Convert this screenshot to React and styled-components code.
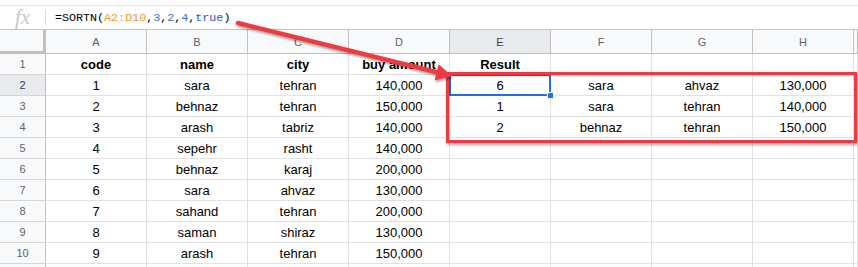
import React from 'react';
import styled, { createGlobalStyle } from 'styled-components';

const Global = createGlobalStyle`
  html, body { margin: 0; padding: 0; background: #fff; overflow: hidden; }
  body { font-family: "Liberation Sans", Arial, sans-serif; }
`;

const Page = styled.div`
  position: relative;
  width: 858px;
  height: 267px;
  overflow: hidden;
  background: #fff;
`;

const FormulaBar = styled.div`
  margin-top: 5px;
  height: 25px;
  box-sizing: border-box;
  border-top: 1px solid #e3e3e3;
  border-bottom: 1px solid #c4c4c4;
  display: flex;
  align-items: center;
`;

const FxIcon = styled.span`
  width: 45px;
  text-align: center;
  font-family: "Liberation Serif", serif;
  font-style: italic;
  font-size: 21px;
  color: #c8c8c8;
  line-height: 1;
`;

const Divider = styled.span`
  width: 1px;
  height: 15px;
  background: #dcdcdc;
`;

const Formula = styled.div`
  padding-left: 9px;
  font-family: "Liberation Mono", monospace;
  font-size: 11.7px;
  color: #000;
  white-space: pre;
`;

const Tok = styled.span`
  color: ${(p) => p.$c};
`;

const Grid = styled.div`
  display: grid;
  grid-template-columns: 46px repeat(8, 101px) 1fr;
  grid-template-rows: 24px;
  grid-auto-rows: 21px;
`;

const Corner = styled.div`
  box-sizing: border-box;
  background: #f8f9fa;
  border-right: 3px solid #c0c0c0;
  border-bottom: 3px solid #c0c0c0;
`;

const ColHead = styled.div`
  box-sizing: border-box;
  background: ${(p) => (p.$active ? '#e8eaed' : '#f8f9fa')};
  border-right: 1px solid #c0c0c0;
  border-bottom: 1px solid #c0c0c0;
  display: flex;
  align-items: center;
  justify-content: center;
  font-size: 11px;
  color: ${(p) => (p.$active ? '#3c4043' : '#5f6368')};
`;

const RowHead = styled.div`
  box-sizing: border-box;
  background: ${(p) => (p.$active ? '#e8eaed' : '#f8f9fa')};
  border-right: 1px solid #c0c0c0;
  border-bottom: 1px solid #d6d6d6;
  display: flex;
  align-items: center;
  justify-content: center;
  font-size: 11px;
  color: ${(p) => (p.$active ? '#3c4043' : '#5f6368')};
`;

const Cell = styled.div`
  position: relative;
  z-index: ${(p) => (p.$selected ? 2 : 'auto')};
  box-sizing: border-box;
  border-right: 1px solid #e2e2e2;
  border-bottom: 1px solid #e2e2e2;
  display: flex;
  align-items: center;
  justify-content: center;
  font-size: 13px;
  font-weight: ${(p) => (p.$bold ? 700 : 400)};
  color: #000;
  white-space: nowrap;
`;

const Selection = styled.div`
  position: absolute;
  top: -1px;
  left: -1px;
  right: -1px;
  bottom: -1px;
  border: 2px solid #1a73e8;
  pointer-events: none;
`;

const Handle = styled.div`
  position: absolute;
  right: -5px;
  bottom: -5px;
  width: 7px;
  height: 7px;
  box-sizing: border-box;
  background: #1a73e8;
  border: 1px solid #fff;
`;

const RedFrame = styled.div`
  position: absolute;
  left: 446px;
  top: 72px;
  width: 411px;
  height: 71px;
  box-sizing: border-box;
  border: 3px solid #ee3a43;
  box-shadow: 1px 2px 3px rgba(0, 0, 0, 0.35), inset 1px 1px 2px rgba(0, 0, 0, 0.25);
  pointer-events: none;
  z-index: 3;
`;

const ArrowLayer = styled.svg`
  position: absolute;
  left: 0;
  top: 0;
  pointer-events: none;
  z-index: 4;
`;

const cols = ['A', 'B', 'C', 'D', 'E', 'F', 'G', 'H'];

const rows = [
  [{ v: 'code', b: 1 }, { v: 'name', b: 1 }, { v: 'city', b: 1 }, { v: 'buy amount', b: 1 }, { v: 'Result', b: 1 }, '', '', ''],
  ['1', 'sara', 'tehran', '140,000', '6', 'sara', 'ahvaz', '130,000'],
  ['2', 'behnaz', 'tehran', '150,000', '1', 'sara', 'tehran', '140,000'],
  ['3', 'arash', 'tabriz', '140,000', '2', 'behnaz', 'tehran', '150,000'],
  ['4', 'sepehr', 'rasht', '140,000', '', '', '', ''],
  ['5', 'behnaz', 'karaj', '200,000', '', '', '', ''],
  ['6', 'sara', 'ahvaz', '130,000', '', '', '', ''],
  ['7', 'sahand', 'tehran', '200,000', '', '', '', ''],
  ['8', 'saman', 'shiraz', '130,000', '', '', '', ''],
  ['9', 'arash', 'tehran', '150,000', '', '', '', ''],
  ['', '', '', '', '', '', '', ''],
];

export default function App() {
  return (
    <Page>
      <Global />
      <FormulaBar>
        <FxIcon>fx</FxIcon>
        <Divider />
        <Formula>
          =SORTN(<Tok $c="#f09a2a">A2:D10</Tok>,<Tok $c="#3b6fd6">3</Tok>,<Tok $c="#3b6fd6">2</Tok>,<Tok $c="#3b6fd6">4</Tok>,<Tok $c="#1c58c9">true</Tok>)
        </Formula>
      </FormulaBar>
      <Grid>
        <Corner />
        {cols.map((c) => (
          <ColHead key={c} $active={c === 'E'}>{c}</ColHead>
        ))}
        <ColHead />
        {rows.map((r, i) => (
          <React.Fragment key={i}>
            <RowHead $active={i === 1}>{i < 10 ? i + 1 : ''}</RowHead>
            {r.map((cell, j) => {
              const val = typeof cell === 'object' ? cell.v : cell;
              const bold = typeof cell === 'object' && cell.b;
              const sel = i === 1 && j === 4;
              return (
                <Cell key={j} $bold={bold} $selected={sel}>
                  {val}
                  {sel && (
                    <Selection>
                      <Handle />
                    </Selection>
                  )}
                </Cell>
              );
            })}
            <Cell />
          </React.Fragment>
        ))}
      </Grid>
      <RedFrame />
      <ArrowLayer width="858" height="267" viewBox="0 0 858 267">
        <defs>
          <filter id="shadow" x="-10%" y="-50%" width="120%" height="200%">
            <feDropShadow dx="1" dy="2" stdDeviation="1.2" floodColor="#000" floodOpacity="0.35" />
          </filter>
        </defs>
        <g filter="url(#shadow)">
          <line x1="238" y1="23" x2="440" y2="73" stroke="#ee3a43" strokeWidth="4.5" strokeLinecap="round" />
          <polygon points="452,76 434.6,80.4 438.6,64.2" fill="#ee3a43" />
        </g>
      </ArrowLayer>
    </Page>
  );
}
